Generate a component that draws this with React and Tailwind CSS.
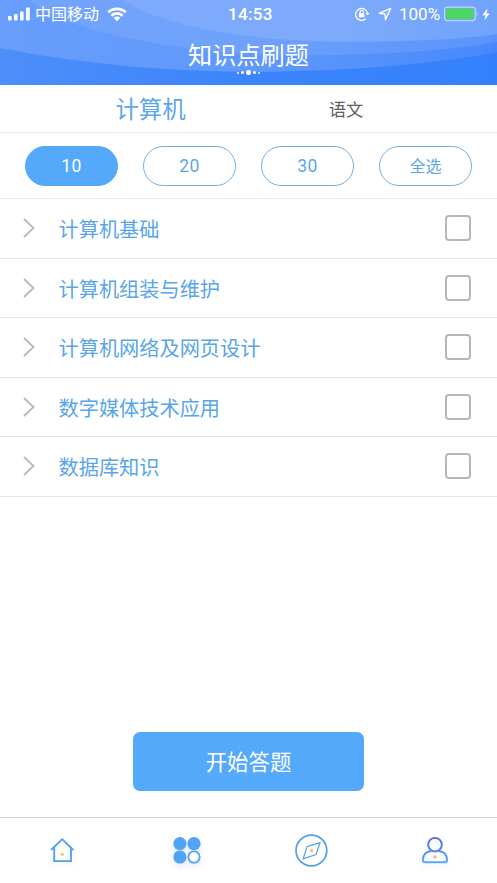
import { useState } from 'react';

const counts = ['10', '20', '30', '全选'];

const topics = [
    '计算机基础',
    '计算机组装与维护',
    '计算机网络及网页设计',
    '数字媒体技术应用',
    '数据库知识',
];

function HeaderWaves() {
    return (
        <svg className="absolute inset-0 h-full w-full" viewBox="0 0 497 85" preserveAspectRatio="none">
            <defs>
                <linearGradient id="base" x1="0" x2="1">
                    <stop offset="0" stopColor="#4d8ff9" />
                    <stop offset="0.5" stopColor="#3b84fb" />
                    <stop offset="1" stopColor="#3580fc" />
                </linearGradient>
                <linearGradient id="waveA" x1="0" x2="1">
                    <stop offset="0" stopColor="#689dfc" />
                    <stop offset="0.5" stopColor="#5f99fc" />
                    <stop offset="1" stopColor="#4888fb" />
                </linearGradient>
                <linearGradient id="waveB" x1="0" x2="1">
                    <stop offset="0" stopColor="#74a4fb" />
                    <stop offset="0.5" stopColor="#6da1fb" />
                    <stop offset="1" stopColor="#5894fb" />
                </linearGradient>
                <linearGradient id="waveC" x1="0" x2="1">
                    <stop offset="0.2" stopColor="#7daafa" />
                    <stop offset="0.6" stopColor="#7daafa" />
                    <stop offset="1" stopColor="#70a3fb" />
                </linearGradient>
            </defs>
            <rect width="497" height="85" fill="url(#base)" />
            <path d="M0 0V48C80 64 165 71 250 72C350 71 430 65 497 52V0Z" fill="url(#waveA)" />
            <path d="M30 0C50 20 105 35 160 44C230 56 300 57 370 54C420 52 465 48 497 42V0Z" fill="url(#waveB)" />
            <path d="M124 0C145 16 185 27 240 35C300 43 350 42 400 41C440 40 470 38 497 34V0Z" fill="url(#waveC)" />
        </svg>
    );
}

function StatusBar() {
    return (
        <div className="relative flex h-7 items-center text-white">
            <svg className="ml-[8px] h-[14px] w-[23px]" viewBox="0 0 23 14" fill="currentColor">
                <rect x="0" y="9" width="3.6" height="4.5" rx="1" />
                <rect x="6" y="7" width="3.6" height="6.5" rx="1" />
                <rect x="12" y="4.5" width="3.6" height="9" rx="1" />
                <rect x="18" y="0.5" width="3.8" height="13" rx="1" />
            </svg>
            <span className="ml-[4px] w-[66px] pt-[2px] text-[16px] leading-7 whitespace-nowrap">中国移动</span>
            <svg className="ml-[6px] h-[15px] w-[20px]" viewBox="0 0 20 15" fill="none" stroke="currentColor" strokeWidth="2.7">
                <path d="M1.2 5.3C6 .7 14 .7 18.8 5.3" />
                <path d="M4.4 8.7C7.5 5.7 12.5 5.7 15.6 8.7" />
                <path d="M6.8 10.8Q10 8.3 13.2 10.8L10 14.2Z" fill="currentColor" stroke="none" />
            </svg>
            <span className="ml-[101px] w-[46px] text-[17px] font-medium leading-7 tracking-[0.3px]">14:53</span>
            <svg className="ml-[81px] h-[14px] w-[15px]" viewBox="0 0 15 14" fill="none" stroke="currentColor" strokeWidth="1.2">
                <path d="M10.7 11.8A6 6 0 1 1 12.6 7" />
                <path d="M10.5 6L12.6 8.3L14.7 6Z" fill="currentColor" stroke="none" />
                <path d="M5 6.4V4.9A1.6 1.6 0 0 1 8.2 4.9V6.4" />
                <rect x="3.9" y="6.2" width="5.4" height="4" rx="0.5" fill="currentColor" stroke="none" />
            </svg>
            <svg className="ml-[8px] h-[14px] w-[14px]" viewBox="0 0 14 14" fill="none" stroke="currentColor" strokeWidth="1.4" strokeLinejoin="round">
                <path d="M12.6 1.4L1.2 6.3L7 7L7.5 12.7Z" />
            </svg>
            <span className="ml-[7px] w-[42px] text-[17px] leading-7">100%</span>
            <svg className="ml-[3px] h-[16px] w-[36px]" viewBox="0 0 36 16">
                <rect x="0.6" y="1.1" width="30.6" height="13.6" rx="3" fill="none" stroke="#c2daff" strokeWidth="1.1" />
                <rect x="2" y="2.5" width="27.8" height="10.8" rx="1.5" fill="#4cd75f" />
                <path d="M32.7 5.5Q34.6 7.9 32.7 10.4Z" fill="#b5d0ff" />
            </svg>
            <svg className="ml-[2px] h-[13px] w-[8px]" viewBox="0 0 8 13" fill="currentColor">
                <path d="M5.5 .5L.3 7.2H3.4L2.4 12.3L7.8 5.4H4.6Z" />
            </svg>
        </div>
    );
}

function TabIcon({ name }) {
    if (name === 'home') {
        return (
            <svg className="h-9 w-9 drop-shadow-[0_3px_3px_rgba(120,140,255,0.15)]" viewBox="0 0 36 36" fill="none" stroke="#50a0f0" strokeWidth="1.8">
                <path d="M7.1 17L18.2 6.2L29.3 17" />
                <path d="M10.2 14.5V28.1H27V14.5" />
                <circle cx="18.4" cy="21.2" r="1.5" fill="#f8c14e" stroke="none" />
            </svg>
        );
    }
    if (name === 'grid') {
        return (
            <svg className="h-9 w-9 drop-shadow-[0_3px_3px_rgba(120,140,255,0.2)]" viewBox="0 0 36 36" fill="#50a3f5">
                <circle cx="11.9" cy="10.6" r="6.6" />
                <circle cx="26" cy="10.6" r="6.6" />
                <circle cx="11.9" cy="24" r="6.6" />
                <circle cx="26" cy="24" r="5.7" fill="white" stroke="#50a3f5" strokeWidth="1.8" />
            </svg>
        );
    }
    if (name === 'compass') {
        return (
            <svg className="h-9 w-9" viewBox="0 0 36 36" fill="none" stroke="#50a0e5">
                <circle cx="18.4" cy="17.5" r="15.4" strokeWidth="1.7" />
                <path d="M27 9.6L14.2 13.4L10.2 25.8L23 21.6Z" strokeWidth="1.2" />
                <circle cx="18.5" cy="17.6" r="1.6" fill="#f8c14e" stroke="none" />
            </svg>
        );
    }
    return (
        <svg className="h-9 w-9 drop-shadow-[0_3px_3px_rgba(120,140,255,0.15)]" viewBox="0 0 36 36" fill="none" strokeWidth="1.9">
            <defs>
                <linearGradient id="head" x1="0" y1="0" x2="0" y2="1">
                    <stop offset="0" stopColor="#5966e5" />
                    <stop offset="1" stopColor="#5186ed" />
                </linearGradient>
                <linearGradient id="body" x1="0" y1="0" x2="0" y2="1">
                    <stop offset="0" stopColor="#5189e9" />
                    <stop offset="1" stopColor="#55aaf3" />
                </linearGradient>
            </defs>
            <path d="M14 18.3C9 18.3 6 21.8 6 26.3V27.6Q6 29.3 8 29.3H28Q30 29.3 30 27.6V26.3C30 21.8 27 18.3 22 18.3" stroke="url(#body)" />
            <circle cx="18" cy="11.7" r="6.8" stroke="url(#head)" />
            <circle cx="18" cy="23.9" r="1.6" fill="#f5b866" />
        </svg>
    );
}

export default function App() {
    const [count, setCount] = useState('10');
    const [checked, setChecked] = useState([]);

    const toggleTopic = (topic) => {
        setChecked(checked.includes(topic) ? checked.filter((t) => t !== topic) : [...checked, topic]);
    };

    return (
        <div className="flex h-[883px] w-[497px] flex-col overflow-hidden bg-white font-['Roboto','Noto_Sans_CJK_SC',sans-serif]">
            <header className="relative h-[85px] shrink-0">
                <HeaderWaves />
                <StatusBar />
                <h1 className="relative mt-[11px] text-center text-[24.2px] leading-[34px] text-white">知识点刷题</h1>
                <div className="relative -mt-[3px] flex h-[5px] items-center justify-center gap-[2px]">
                    <span className="size-[2px] rounded-full bg-white" />
                    <span className="size-[3px] rounded-full bg-white" />
                    <span className="size-[5px] rounded-full bg-white" />
                    <span className="size-[3px] rounded-full bg-white" />
                    <span className="size-[2px] rounded-full bg-white" />
                </div>
            </header>

            <nav className="flex h-[48px] shrink-0 items-center border-b border-[#e9e9e9] pl-[52px]">
                <button className="w-[197px] pt-[2px] text-center text-[23.4px] leading-[46px] text-[#5aa7ea]">计算机</button>
                <button className="w-[194px] pt-[2px] text-center text-[17.3px] leading-[46px] text-[#606060]">语文</button>
            </nav>

            <div className="flex h-[66px] shrink-0 items-center justify-between border-b border-[#e9e9e9] px-[25px]">
                {counts.map((item) => (
                    <button
                        key={item}
                        onClick={() => setCount(item)}
                        className={`h-[40px] w-[93px] rounded-full border ${
                            item === '全选' ? 'pt-[3px] text-[16px]' : 'pt-[2px] text-[17.5px] tracking-[0.4px]'
                        } ${count === item ? 'border-[#55a9fa] bg-[#55a9fa] text-white' : 'border-[#70b1e8] bg-white text-[#5ba7e6]'}`}
                    >
                        {item}
                    </button>
                ))}
            </div>

            <ul className="shrink-0">
                {topics.map((topic) => (
                    <li key={topic} className="flex h-[59.5px] items-center border-b border-[#e6e6e6] pr-[26px] pl-[23px]">
                        <svg className="h-[20px] w-[12px]" viewBox="0 0 12 20" fill="none" stroke="#b8b8b8" strokeWidth="1.8">
                            <path d="M1 1L10.5 10L1 19" />
                        </svg>
                        <span className="ml-[23.5px] flex-1 pt-[4px] text-[20.2px] leading-[30px] text-[#58a5e9]">{topic}</span>
                        <button
                            aria-label={topic}
                            onClick={() => toggleTopic(topic)}
                            className={`size-[26px] rounded-[4px] border-2 border-[#b7b7b7] ${checked.includes(topic) ? 'bg-[#55a9fa]' : 'bg-white'}`}
                        />
                    </li>
                ))}
            </ul>

            <div className="flex flex-1 items-end justify-center pb-[26px]">
                <button className="h-[59px] w-[231px] rounded-[7px] bg-[#55a9fa] pt-[3px] text-[21.4px] text-white">开始答题</button>
            </div>

            <footer className="flex h-[66px] shrink-0 items-center border-t border-[#cfcfcf]">
                {['home', 'grid', 'compass', 'user'].map((name) => (
                    <button key={name} className="flex flex-1 justify-center">
                        <TabIcon name={name} />
                    </button>
                ))}
            </footer>
        </div>
    );
}
